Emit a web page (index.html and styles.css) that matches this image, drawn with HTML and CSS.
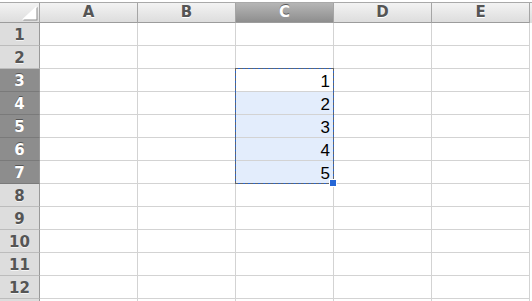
FILE: index.html
```html
<!DOCTYPE HTML>
<html>
	<head>
		<title>Sheet</title>
		<link rel="stylesheet" href="styles.css">
	</head>
	<body>
		<div class="sheet">
			<div class="row head">
				<div class="corner">
					<svg width="39" height="19" viewBox="0 0 39 19">
						<polygon points="23,17.5 37.5,17.5 37.5,4" fill="#8a8a8a"/>
						<polygon points="22,16.5 36.5,16.5 36.5,3" fill="#ffffff"/>
					</svg>
				</div>
				<div class="col">A</div>
				<div class="col">B</div>
				<div class="col sel">C</div>
				<div class="col">D</div>
				<div class="col">E</div>
			</div>
			<div class="row"><div class="num">1</div><div class="cell"></div><div class="cell"></div><div class="cell"></div><div class="cell"></div><div class="cell"></div></div>
			<div class="row"><div class="num">2</div><div class="cell"></div><div class="cell"></div><div class="cell"></div><div class="cell"></div><div class="cell"></div></div>
			<div class="row"><div class="num sel">3</div><div class="cell"></div><div class="cell"></div><div class="cell val active">1</div><div class="cell"></div><div class="cell"></div></div>
			<div class="row"><div class="num sel">4</div><div class="cell"></div><div class="cell"></div><div class="cell val picked">2</div><div class="cell"></div><div class="cell"></div></div>
			<div class="row"><div class="num sel">5</div><div class="cell"></div><div class="cell"></div><div class="cell val picked">3</div><div class="cell"></div><div class="cell"></div></div>
			<div class="row"><div class="num sel">6</div><div class="cell"></div><div class="cell"></div><div class="cell val picked">4</div><div class="cell"></div><div class="cell"></div></div>
			<div class="row"><div class="num sel">7</div><div class="cell"></div><div class="cell"></div><div class="cell val picked">5</div><div class="cell"></div><div class="cell"></div></div>
			<div class="row"><div class="num">8</div><div class="cell"></div><div class="cell"></div><div class="cell"></div><div class="cell"></div><div class="cell"></div></div>
			<div class="row"><div class="num">9</div><div class="cell"></div><div class="cell"></div><div class="cell"></div><div class="cell"></div><div class="cell"></div></div>
			<div class="row"><div class="num">10</div><div class="cell"></div><div class="cell"></div><div class="cell"></div><div class="cell"></div><div class="cell"></div></div>
			<div class="row"><div class="num">11</div><div class="cell"></div><div class="cell"></div><div class="cell"></div><div class="cell"></div><div class="cell"></div></div>
			<div class="row"><div class="num">12</div><div class="cell"></div><div class="cell"></div><div class="cell"></div><div class="cell"></div><div class="cell"></div></div>
			<div class="row"><div class="num"></div><div class="cell"></div><div class="cell"></div><div class="cell"></div><div class="cell"></div><div class="cell"></div></div>

			<!-- selection C3:C7 -->
			<div class="selection"><div class="handle"></div></div>
		</div>
	</body>
</html>
```

FILE: styles.css
```css
html, body {
	margin: 0;
	padding: 0;
	background-color: #ffffff;
	overflow: hidden;
}

.sheet {
	position: relative;
	width: 532px;
	height: 301px;
	overflow: hidden;
	padding-top: 2px;
	box-sizing: border-box;
	font-family: "Liberation Sans", Arial, sans-serif;
}

.row {
	display: flex;
	height: 23px;
}

.row > div {
	box-sizing: border-box;
	flex: none;
}

.head {
	height: 21px;
	border-top: 1px solid #a9a9a9;
	background: linear-gradient(#f3f3f3, #dcdcdc);
	box-sizing: border-box;
}

.corner {
	width: 40px;
	height: 20px;
	border-right: 1px solid #a5a5a5;
	border-bottom: 1px solid #9c9c9c;
}

.corner svg {
	display: block;
}

.col {
	width: 98px;
	height: 20px;
	border-right: 1px solid #a5a5a5;
	border-bottom: 1px solid #9c9c9c;
	text-align: center;
	font-family: "DejaVu Sans", sans-serif;
	font-weight: bold;
	font-size: 15px;
	line-height: 19px;
	color: #555555;
	text-shadow: 0 1px 0 #ffffff;
}

.col.sel {
	background: linear-gradient(#b6b6b6, #8e8e8e);
	color: #ffffff;
	text-shadow: 0 -1px 0 #5a5a5a;
}

.num {
	width: 40px;
	height: 23px;
	background-color: #dddddd;
	border-right: 1px solid #999999;
	border-bottom: 1px solid #bcbcbc;
	text-align: center;
	font-family: "DejaVu Sans", sans-serif;
	font-weight: bold;
	font-size: 15px;
	line-height: 24px;
	color: #555555;
	text-shadow: 0 1px 0 #f4f4f4;
}

.num.sel {
	background-color: #8d8d8d;
	border-bottom: 1px solid #7a7a7a;
	color: #ffffff;
	text-shadow: 0 -1px 0 #555555;
}

.cell {
	width: 98px;
	height: 23px;
	border-right: 1px solid #d3d3d3;
	border-bottom: 1px solid #d3d3d3;
}

.val {
	text-align: right;
	padding-right: 3px;
	font-size: 17px;
	line-height: 25px;
	color: #000000;
}

.picked {
	background-color: #e3edfc;
}

.selection {
	position: absolute;
	left: 235px;
	top: 68px;
	width: 99px;
	height: 116px;
	box-sizing: border-box;
	border: 1px solid #2566d6;
}

.selection::after {
	content: "";
	position: absolute;
	left: -1px;
	top: -1px;
	right: -1px;
	bottom: -1px;
	border: 1px dashed #666666;
}

.handle {
	position: absolute;
	right: -4px;
	bottom: -4px;
	width: 6px;
	height: 6px;
	background-color: #2566d6;
	border: 1px solid #ffffff;
	z-index: 1;
}
```
